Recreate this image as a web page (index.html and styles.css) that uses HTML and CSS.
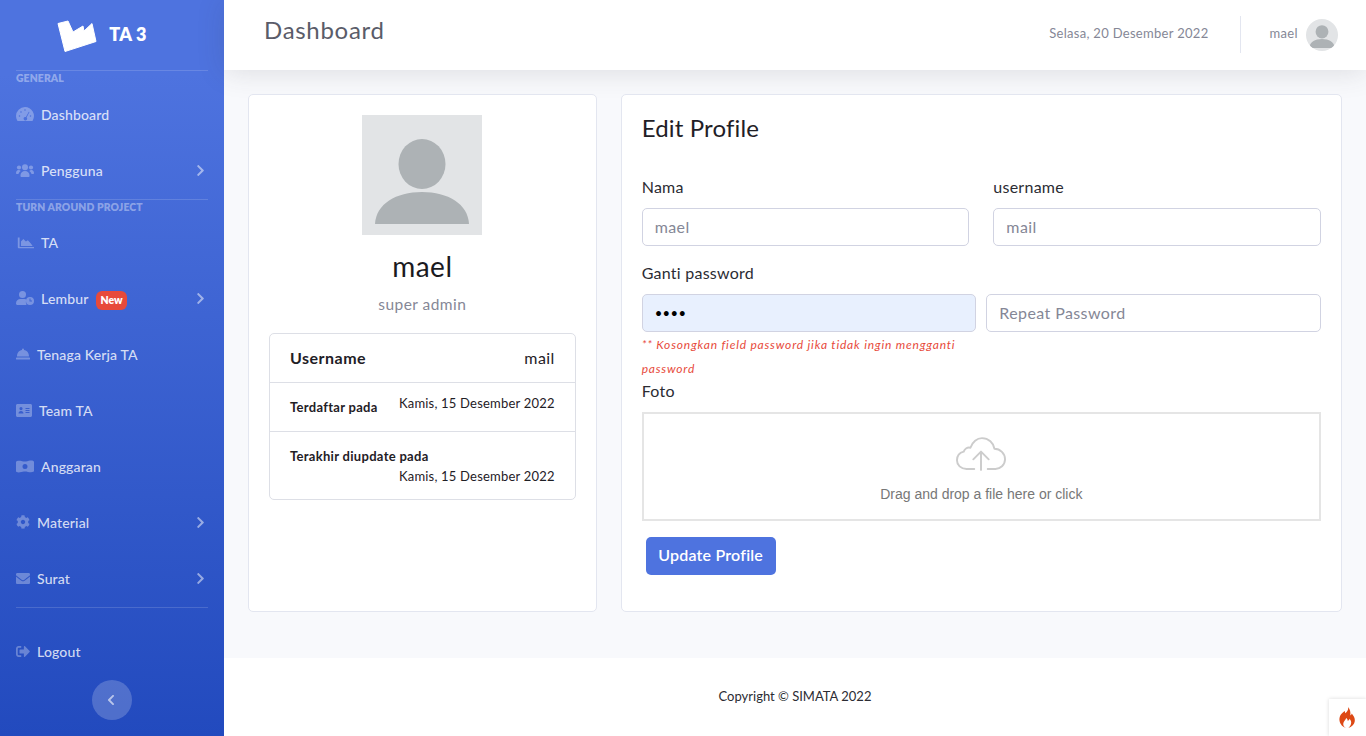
FILE: index.html
```html
<!DOCTYPE html>
<html lang="id">
<head>
  <meta charset="UTF-8">
  <title>Dashboard</title>
  <link rel="stylesheet" href="styles.css">
</head>
<body>
<div class="app">
  <aside class="sidebar">
    <div class="brand">
      <svg class="brand-logo" width="40" height="32" viewBox="0 0 40 32"><path d="M1 3.500L11 1l5 11 10-6 1 5 8-7.500 4 18-31 10z" stroke="#fff" stroke-width="1" stroke-linejoin="round"/></svg>
      <span>TA 3</span>
    </div>
    <hr class="side-line">
    <div class="side-heading">General</div>
    <a class="side-item"><svg class="ico" width="18" height="14" viewBox="0 0 18 14"><path fill-rule="evenodd" d="M9 0a9 9 0 0 0-9 9c0 1.700.4 3.100 1.200 4.400.2.400.6.600 1 .6h13.600c.4 0 .8-.2 1-.6A9 9 0 0 0 9 0zM9 2.200a.8.8 0 1 1 0 1.600.8.8 0 0 1 0-1.600zM3.500 8.200a.8.8 0 1 1 0 1.600.8.8 0 0 1 0-1.600zm11 0a.8.8 0 1 1 0 1.600.8.8 0 0 1 0-1.600zM5 4.200a.8.8 0 1 1 0 1.600.8.8 0 0 1 0-1.600zm7.800.500l.7.400-2.900 5.300a1.800 1.800 0 1 1-.7-.4z"/></svg><span>Dashboard</span></a>
    <a class="side-item"><svg class="ico" width="18" height="13" viewBox="0 0 18 13"><circle cx="3" cy="3.500" r="2.100"/><circle cx="15" cy="3.500" r="2.100"/><circle cx="9" cy="3.200" r="3"/><path d="M4.500 12.300V11c0-2.200 2-4 4.500-4s4.500 1.800 4.500 4v1.300c0 .4-.3.700-.7.700H5.200c-.4 0-.7-.3-.7-.7zM0 9.300C0 7.300.9 6 2.500 6c.9 0 1.700.300 2.200.9C3.400 7.700 2.700 8.800 2.500 10H.8c-.5 0-.8-.3-.8-.7zm18 0C18 7.300 17.100 6 15.500 6c-.9 0-1.700.300-2.200.9 1.300.8 2 1.900 2.200 3.100h1.700c.5 0 .8-.3.8-.7z"/></svg><span>Pengguna</span><svg class="arrow" width="9" height="13" viewBox="0 0 320 512"><path d="M285.476 272.971L91.132 467.314c-9.373 9.373-24.569 9.373-33.941 0l-22.667-22.667c-9.357-9.357-9.375-24.522-.04-33.901L188.505 256 34.484 101.255c-9.335-9.379-9.317-24.544.04-33.901l22.667-22.667c9.373-9.373 24.569-9.373 33.941 0L285.475 239.030c9.373 9.372 9.373 24.568.001 33.941z"/></svg></a>
    <hr class="side-line">
    <div class="side-heading side-heading-tight">Turn Around Project</div>
    <a class="side-item"><svg class="ico" width="18" height="13" viewBox="-2 -1 20 13"><path d="M2 0v10.500h16V12H1.200C.5 12 0 11.500 0 10.800V0zm1.500 9.500V4.500L6.200 1.500l2.800 3 2.200-1.500 3.300 3.500 2 3z"/></svg><span>TA</span></a>
    <a class="side-item"><svg class="ico" width="18" height="14" viewBox="0 0 18 14"><circle cx="6.500" cy="3.500" r="3.500"/><path d="M0 12.500C0 9.500 2 8 4.500 8h4c.8 0 1.500.2 2 .5a5.500 5.500 0 0 0 0 5.500H1.500C.7 14 0 13.300 0 12.500z"/><path fill-rule="evenodd" d="M14 6.500a4 4 0 1 1 0 8 4 4 0 0 1 0-8zm-.5 1.500v3h2.500v-1h-1.500V8z" transform="translate(0 -.5)"/></svg><span>Lembur</span><span class="badge">New</span><svg class="arrow" width="9" height="13" viewBox="0 0 320 512"><path d="M285.476 272.971L91.132 467.314c-9.373 9.373-24.569 9.373-33.941 0l-22.667-22.667c-9.357-9.357-9.375-24.522-.04-33.901L188.505 256 34.484 101.255c-9.335-9.379-9.317-24.544.04-33.901l22.667-22.667c9.373-9.373 24.569-9.373 33.941 0L285.475 239.030c9.373 9.372 9.373 24.568.001 33.941z"/></svg></a>
    <a class="side-item"><svg class="ico" width="14" height="12" viewBox="0 0 14 11"><path d="M7 0a1 1 0 0 1 1 1v.600c3 .4 5 3 5 6.400H1c0-3.400 2-6 5-6.400V1a1 1 0 0 1 1-1zM.6 9h12.800c.3 0 .6.300.6.600v.8c0 .3-.3.600-.6.600H.6c-.3 0-.6-.3-.6-.6v-.8c0-.3.300-.6.600-.6z"/></svg><span>Tenaga Kerja TA</span></a>
    <a class="side-item"><svg class="ico" width="16" height="13" viewBox="0 0 16 13"><path fill-rule="evenodd" d="M1.500 0h13c.8 0 1.500.7 1.500 1.500v10c0 .8-.7 1.500-1.500 1.500h-13C.7 13 0 12.300 0 11.500v-10C0 .7.700 0 1.500 0zM5 3a1.600 1.600 0 1 0 0 3.200A1.600 1.600 0 0 0 5 3zM2.500 9.500h5c0-1.300-1-2.400-2.500-2.400S2.500 8.200 2.500 9.500zM9.500 4v1h4V4zm0 2v1h4V6zm0 2v1h4V8z"/></svg><span>Team TA</span></a>
    <a class="side-item"><svg class="ico" width="18" height="13" viewBox="0 0 18 13"><path fill-rule="evenodd" d="M0 2.200C0 1.700.3 1.300.7 1.200 4 0 7 2 10 1.500c2.500-.4 5-1.500 7.300-.6.400.2.700.6.700 1.100v8.800c0 .5-.3.900-.7 1-3.300 1.200-6.300-.8-9.300-.3-2.500.4-5 1.500-7.300.6-.4-.2-.7-.6-.7-1.100zM9 4a2.500 2.500 0 1 0 0 5 2.500 2.500 0 0 0 0-5z"/></svg><span>Anggaran</span></a>
    <a class="side-item"><svg class="ico" width="14" height="14" viewBox="0 0 512 512"><path d="M487.4 315.7l-42.6-24.6c4.300-23.2 4.300-47 0-70.200l42.6-24.6c4.900-2.800 7.100-8.600 5.500-14-11.100-35.600-30-67.800-54.700-94.600-3.800-4.100-10-5.100-14.800-2.300L380.800 110c-17.900-15.400-38.500-27.300-60.800-35.100V25.800c0-5.600-3.900-10.500-9.400-11.700-36.700-8.200-74.300-7.800-109.200 0-5.500 1.200-9.400 6.100-9.400 11.700V75c-22.200 7.900-42.800 19.800-60.800 35.100L88.700 85.500c-4.900-2.800-11-1.900-14.800 2.300-24.700 26.700-43.600 58.900-54.700 94.600-1.700 5.400.6 11.200 5.500 14L67.300 221c-4.300 23.200-4.300 47 0 70.200l-42.6 24.600c-4.900 2.800-7.100 8.600-5.500 14 11.100 35.600 30 67.800 54.700 94.600 3.800 4.100 10 5.100 14.800 2.300l42.600-24.600c17.900 15.400 38.500 27.300 60.800 35.100v49.200c0 5.600 3.900 10.500 9.400 11.700 36.700 8.200 74.300 7.800 109.200 0 5.500-1.200 9.400-6.100 9.400-11.700v-49.200c22.200-7.900 42.800-19.800 60.800-35.100l42.600 24.600c4.900 2.800 11 1.900 14.800-2.300 24.700-26.700 43.600-58.900 54.700-94.600 1.500-5.500-.7-11.300-5.600-14.100zM256 336c-44.100 0-80-35.900-80-80s35.900-80 80-80 80 35.900 80 80-35.900 80-80 80z"/></svg><span>Material</span><svg class="arrow" width="9" height="13" viewBox="0 0 320 512"><path d="M285.476 272.971L91.132 467.314c-9.373 9.373-24.569 9.373-33.941 0l-22.667-22.667c-9.357-9.357-9.375-24.522-.04-33.901L188.505 256 34.484 101.255c-9.335-9.379-9.317-24.544.04-33.901l22.667-22.667c9.373-9.373 24.569-9.373 33.941 0L285.475 239.030c9.373 9.372 9.373 24.568.001 33.941z"/></svg></a>
    <a class="side-item"><svg class="ico" width="14" height="11" viewBox="0 64 512 384" preserveAspectRatio="none"><path d="M502.3 190.800c3.900-3.100 9.700-.2 9.700 4.700V400c0 26.500-21.500 48-48 48H48c-26.500 0-48-21.500-48-48V195.600c0-5 5.700-7.800 9.700-4.700 22.400 17.400 52.100 39.500 154.100 113.600 21.100 15.400 56.700 47.800 92.200 47.600 35.700.3 72-32.800 92.300-47.600 102-74.100 131.600-96.300 154-113.700zM256 320c23.200.4 56.600-29.200 73.400-41.400 132.700-96.300 142.800-104.700 173.400-128.700 5.800-4.500 9.200-11.500 9.200-18.900v-19c0-26.500-21.500-48-48-48H48C21.500 64 0 85.500 0 112v19c0 7.400 3.400 14.300 9.200 18.900 30.600 23.900 40.700 32.400 173.400 128.700 16.800 12.200 50.200 41.800 73.400 41.400z"/></svg><span>Surat</span><svg class="arrow" width="9" height="13" viewBox="0 0 320 512"><path d="M285.476 272.971L91.132 467.314c-9.373 9.373-24.569 9.373-33.941 0l-22.667-22.667c-9.357-9.357-9.375-24.522-.04-33.901L188.505 256 34.484 101.255c-9.335-9.379-9.317-24.544.04-33.901l22.667-22.667c9.373-9.373 24.569-9.373 33.941 0L285.475 239.030c9.373 9.372 9.373 24.568.001 33.941z"/></svg></a>
    <hr class="side-line side-line-end">
    <a class="side-item"><svg class="ico" width="14" height="11" viewBox="0 64 512 384" preserveAspectRatio="none"><path d="M497 273L329 441c-15 15-41 4.500-41-17v-96H152c-13.300 0-24-10.700-24-24v-96c0-13.300 10.700-24 24-24h136V88c0-21.400 25.900-32 41-17l168 168c9.300 9.400 9.300 24.600 0 34zM192 436v-40c0-6.600-5.400-12-12-12H96c-17.700 0-32-14.300-32-32V160c0-17.700 14.300-32 32-32h84c6.600 0 12-5.400 12-12V76c0-6.600-5.400-12-12-12H96c-53 0-96 43-96 96v192c0 53 43 96 96 96h84c6.600 0 12-5.400 12-12z"/></svg><span>Logout</span></a>
    <div class="toggle"><svg width="8" height="12" viewBox="0 0 320 512"><path d="M34.520 239.030L228.870 44.690c9.370-9.370 24.570-9.370 33.940 0l22.670 22.670c9.360 9.360 9.370 24.520.04 33.900L131.490 256l154.020 154.750c9.340 9.380 9.320 24.540-.04 33.900l-22.670 22.670c-9.370 9.370-24.570 9.370-33.940 0L34.520 272.970c-9.370-9.370-9.370-24.570 0-33.940z"/></svg></div>
  </aside>

  <div class="main">
    <header class="topbar">
      <h1>Dashboard</h1>
      <div class="top-right">
        <span class="top-date">Selasa, 20 Desember 2022</span>
        <div class="top-sep"></div>
        <span class="top-user">mael</span>
        <svg class="avatar-small" width="32" height="32" viewBox="0 0 120 120"><rect width="120" height="120" fill="#e2e4e6"/><ellipse cx="60" cy="48" rx="24" ry="25" fill="#adb2b5"/><path d="M13 109c0-24 21-34 47-34s47 10 47 34z" fill="#adb2b5"/></svg>
      </div>
    </header>

    <div class="content">
      <section class="card profile-card">
        <svg class="profile-pic" width="120" height="120" viewBox="0 0 120 120"><rect width="120" height="120" fill="#e2e4e6"/><ellipse cx="60" cy="49" rx="23.500" ry="25" fill="#adb2b5"/><path d="M13 109c1-20 21-32 47-32s46 12 47 32z" fill="#adb2b5"/></svg>
        <h2 class="profile-name">mael</h2>
        <p class="profile-role">super admin</p>
        <div class="info-list">
          <div class="info-row info-main"><strong>Username</strong><span>mail</span></div>
          <div class="info-row info-date"><strong>Terdaftar pada</strong><span>Kamis, 15 Desember 2022</span></div>
          <div class="info-row info-stack"><strong>Terakhir diupdate pada</strong><span>Kamis, 15 Desember 2022</span></div>
        </div>
      </section>

      <section class="card edit-card">
        <h2 class="edit-title">Edit Profile</h2>
        <div class="form-row gap-wide">
          <div>
            <label>Nama</label>
            <input type="text" placeholder="mael">
          </div>
          <div>
            <label>username</label>
            <input type="text" placeholder="mail">
          </div>
        </div>
        <label>Ganti password</label>
        <div class="form-row gap-small">
          <div>
            <input class="filled" type="password" value="mael">
            <small class="hint">** Kosongkan field password jika tidak ingin mengganti password</small>
          </div>
          <div>
            <input type="password" placeholder="Repeat Password">
          </div>
        </div>
        <label>Foto</label>
        <div class="dropzone">
          <svg width="50" height="35" viewBox="0 0 52 36" fill="none" stroke="#ccc" stroke-width="2" stroke-linecap="round" stroke-linejoin="round"><path d="M19 33H11C5 33 1 29 1 24c0-5 3-8 7-9 1-3 4-5 7-4 2-6 7-10 12-10 7 0 12 5 13 11 6 0 11 5 11 11 0 6-5 10-10 10h-8"/><path d="M26 34V15M18 23l8-8 8 8"/></svg>
          <p>Drag and drop a file here or click</p>
        </div>
        <button class="btn-update" type="button">Update Profile</button>
      </section>
    </div>

    <footer class="footer">Copyright © SIMATA 2022</footer>
  </div>
</div>

<div class="ci-corner">
  <svg width="17" height="21" viewBox="0 0 17 21"><path fill-rule="evenodd" fill="#dd4814" d="M9 0c.8 3-1 4.500-2.500 6.200C6 5.500 5.800 5 6 4 2.500 6 0 9 .5 13.500 1 17.500 4 20 7 21c-1.800-1-3-2.600-2.700-4.600.3-2 2.200-3 2.900-5.400 1.300 1 1.600 2 1.500 3 1-.4 1.700-1.200 1.800-2.200 1.500 1.700 2 3.300 1.500 5-.3 1.700-1.300 3-2.600 4.200 3-.8 6-3.500 6.400-7C16.200 10 13.500 8 12.800 6.500c-.4 1-.8 1.500-1.500 2C11.800 5 11 2 9 0z"/></svg>
</div>
</body>
</html>
```

FILE: styles.css
```css
* { box-sizing: border-box; }
body { margin: 0; font-family: "Lato", "Noto Sans", sans-serif; color: #2b2c33; background: #f8f9fc; }
h1, h2, p { margin: 0; font-weight: 400; }

.app { display: flex; min-height: 100vh; }

/* sidebar */
.sidebar { width: 224px; flex: none; display: flex; flex-direction: column; background: linear-gradient(180deg, #4e73df 10%, #224abe 100%); color: rgba(255,255,255,.8); }
.brand { height: 70px; display: flex; align-items: center; justify-content: center; gap: 12px; padding-right: 22px; color: #fff; font-size: 18px; font-weight: 800; letter-spacing: .3px; }
.brand span { margin-bottom: 2px; }
.brand-logo { fill: #fff; margin-top: 2px; margin-left: 2px; }
.side-line { height: 1px; margin: 0 16px; border: 0; background: rgba(255,255,255,.15); flex: none; }
.side-line-end { margin-bottom: 16px; }
.side-heading { height: 16px; line-height: 14px; padding-left: 16px; font-size: 10.400px; font-weight: 800; letter-spacing: .1px; text-transform: uppercase; color: rgba(255,255,255,.4); }
.side-heading-tight { height: 15px; }
.side-item { height: 56px; display: flex; align-items: center; gap: 7px; padding: 0 19px 2px 16px; font-size: 14px; font-weight: 500; letter-spacing: .15px; }
.ico { fill: #fff; opacity: .3; flex: none; }
.arrow { fill: #fff; opacity: .5; margin-left: auto; }
.badge { margin-left: 1px; margin-top: 4px; padding: 0 4px; height: 19px; line-height: 19px; border-radius: 6px; background: #e74a3b; color: #fff; font-size: 10.500px; font-weight: 800; letter-spacing: 0; }
.toggle { width: 40px; height: 40px; margin: 0 auto 16px; border-radius: 50%; background: rgba(255,255,255,.2); display: flex; align-items: center; justify-content: center; }
.toggle svg { fill: rgba(255,255,255,.6); margin-right: 2px; }

/* topbar */
.main { flex: 1; min-width: 0; display: flex; flex-direction: column; }
.topbar { height: 70px; flex: none; display: flex; align-items: center; justify-content: space-between; padding: 0 28px 8px 40px; background: #fff; box-shadow: 0 2px 28px rgba(58,59,69,.15); }
.topbar h1 { font-size: 24px; color: #5a5c69; letter-spacing: .7px; margin-bottom: 4px; }
.top-right { display: flex; align-items: center; margin-top: 8px; }
.top-date { font-size: 13px; color: #858796; letter-spacing: .3px; margin-bottom: 4px; }
.top-sep { width: 1px; height: 37px; margin: 0 30px 2px 31px; background: #e3e6f0; }
.top-user { font-size: 13px; color: #858796; margin: 0 8px 4px -1px; letter-spacing: .35px; }
.avatar-small { border-radius: 50%; }

/* cards */
.content { flex: 1; display: grid; grid-template-columns: 348.670px 1fr; gap: 24px; align-items: start; padding: 24px 24px 46px; }
.card { background: #fff; border: 1px solid #e3e6f0; border-radius: 5px; padding: 20px; }
.profile-card { height: 518px; text-align: center; }
.edit-card { padding-bottom: 36px; }
.profile-pic { display: block; margin: 0 auto; }
.profile-name { margin-top: 14px; font-size: 28px; line-height: 34px; color: #1a1a1f; letter-spacing: .5px; }
.profile-role { margin-top: 10px; font-size: 15.500px; line-height: 22px; color: #858796; letter-spacing: .45px; }
.info-list { margin-top: 18px; border: 1px solid #dddfe6; border-radius: 5px; text-align: left; }
.info-row { display: flex; justify-content: space-between; padding: 0 20px; color: #1f2026; }
.info-row + .info-row { border-top: 1px solid #dddfe6; }
.info-main { height: 48px; align-items: center; font-size: 16px; padding-bottom: 1px; }
.info-main span { letter-spacing: .4px; }
.info-main strong { letter-spacing: .5px; }
.info-date { height: 49px; align-items: flex-start; font-size: 13px; }
.info-date strong { margin-top: 16px; }
.info-date span { margin-top: 12px; letter-spacing: .2px; }
.info-stack { height: 68px; flex-direction: column; justify-content: flex-start; font-size: 13px; padding-top: 16px; }
.info-stack span { align-self: flex-end; margin-top: 4px; letter-spacing: .2px; }
.info-row strong { font-weight: 700; }
.info-date strong, .info-stack strong { letter-spacing: .3px; }

/* form */
.edit-title { font-size: 24px; line-height: 25px; margin-bottom: 36px; color: #1f2026; letter-spacing: .15px; }
.form-row { display: grid; grid-template-columns: 1fr 1fr; }
.gap-wide { column-gap: 24px; margin-bottom: 16px; }
.gap-small { column-gap: 10px; }
label { display: block; font-size: 16px; line-height: 22px; margin-bottom: 10px; color: #2b2c33; letter-spacing: .25px; }
input { display: block; width: 100%; height: 38px; padding: 0 12px 2px; border: 1px solid #d1d3e2; border-radius: 5px; font: 16px "Lato", sans-serif; letter-spacing: .4px; color: #000; background: #fff; }
input::placeholder { color: #858796; opacity: 1; }
.filled { background: #e8f0fe; font-size: 13px; padding-bottom: 0; }
.hint { display: block; padding-top: 1px; margin-bottom: -1px; font-size: 12px; line-height: 24px; font-style: italic; color: #e74a3b; letter-spacing: .8px; }
.dropzone { height: 109px; margin-bottom: 16px; border: 2px solid #e5e5e5; display: flex; flex-direction: column; align-items: center; padding-top: 23px; }
.dropzone p { margin-top: 14px; font: 14px "Liberation Sans", sans-serif; color: #777; }
.btn-update { display: block; height: 38px; width: 130px; margin-left: 4px; padding: 0 0 4px; border: 0; border-radius: 5px; background: #4e73df; color: #fff; font: 600 16px "Lato", sans-serif; letter-spacing: .2px; }

.footer { height: 78px; flex: none; display: flex; align-items: center; justify-content: center; padding-bottom: 2px; background: #fff; font-size: 13px; color: #2b2c33; }

.ci-corner { position: fixed; right: 0; bottom: 0; width: 37px; height: 37px; display: flex; align-items: center; justify-content: center; background: #fff; box-shadow: 0 0 4px rgba(0,0,0,.15); }
```
